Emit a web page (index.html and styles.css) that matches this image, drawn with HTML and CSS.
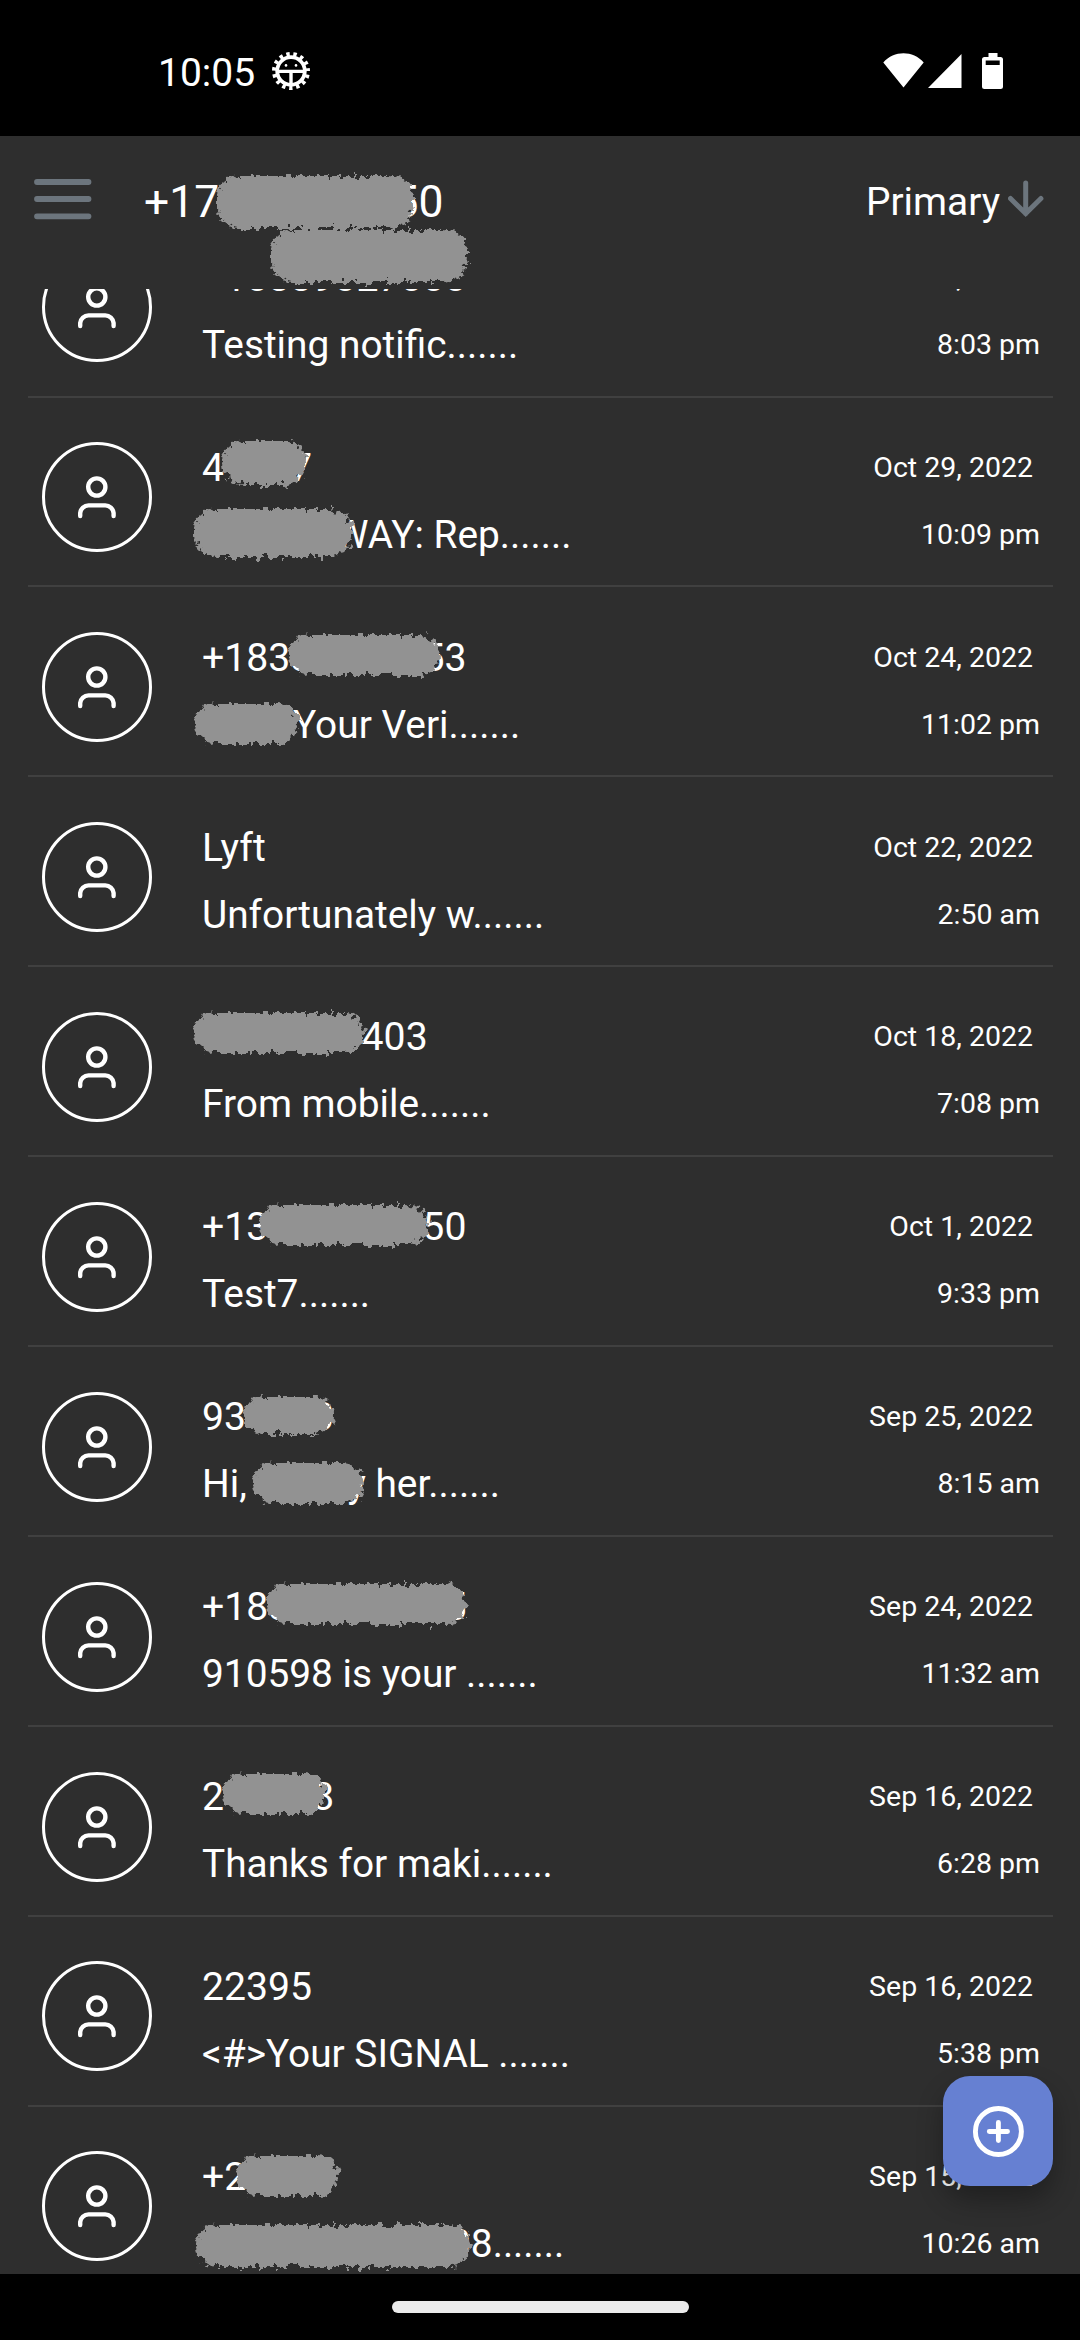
FILE: index.html
```html
<!DOCTYPE html>
<html lang="en">
<head>
<meta charset="utf-8">
<title>Messages</title>
<link rel="stylesheet" href="styles.css">
</head>
<body>
<svg class="defs" width="0" height="0" aria-hidden="true">
  <filter id="rough" x="-10%" y="-20%" width="120%" height="140%">
    <feTurbulence type="fractalNoise" baseFrequency="0.16" numOctaves="3" seed="7" result="n"/>
    <feDisplacementMap in="SourceGraphic" in2="n" scale="15" xChannelSelector="R" yChannelSelector="G"/>
  </filter>
  <symbol id="user" viewBox="3 3 104 104">
    <g fill="none" stroke="#fff" stroke-width="4.4" stroke-linecap="round">
      <circle cx="54.8" cy="45" r="8.6"/>
      <path d="M38.2 74v-3a8.4 8.4 0 0 1 8.4-7.6h16.6a8.4 8.4 0 0 1 8.4 7.6v3"/>
    </g>
  </symbol>
</svg>
<div class="screen">
  <div class="status">
    <span class="clock">10:05</span>
    <svg class="bug" viewBox="-20 -20 40 40">
      <circle r="17" fill="none" stroke="#fff" stroke-width="4" stroke-dasharray="3.4 3.721" stroke-dashoffset="-3.64"/>
      <circle r="13.800" fill="none" stroke="#fff" stroke-width="3.800"/>
      <path d="M-13 .4H13M0 0V15" stroke="#fff" stroke-width="3.4"/>
      <circle cx="-5" cy="-5.6" r="1.3" fill="#fff"/><circle cx="5" cy="-5.6" r="1.3" fill="#fff"/>
    </svg>
    <svg class="tray" viewBox="0 0 120 36">
      <path fill="#fff" d="M.3 9.5C11-2.7 30-2.7 40.7 9.5L20.5 34.5zM45 35 78.500 1V35zM105.500 0h9v4h3a2.500 2.500 0 0 1 2.500 2.500v27a2.500 2.500 0 0 1-2.500 2.500h-16a2.500 2.500 0 0 1-2.500-2.500v-27a2.500 2.500 0 0 1 2.500-2.500h4zM102.700 7.500v4.500h14v-4.500z" fill-rule="evenodd"/>
    </svg>
  </div>
  <header class="header">
    <svg class="menu" viewBox="0 0 58 42"><path d="M3 4H54.500M3 21H54.500M3 38.300H54.500" stroke="#6c757d" stroke-width="5.800" stroke-linecap="round"/></svg>
    <div class="title">+17<i class="gap" style="--n:7"></i>50<i class="scribble" style="left:73px;top:0;width:196px;height:52px"></i><i class="scribble" style="left:127px;top:54px;width:196px;height:52px"></i></div>
    <div class="filter">Primary</div>
    <svg class="arrow" viewBox="0 0 36 38"><path d="M17.700 3V33.500M2.500 18.500l15.200 15 15.200-15" fill="none" stroke="#6c757d" stroke-width="5" stroke-linecap="round"/></svg>
  </header>
  <main class="list">
    <article class="row">
      <svg class="avatar"><use href="#user"/></svg>
      <div class="text"><p>+18339827888</p><p>Testing notific.......</p></div>
      <div class="when"><p class="date">Oct 31, 2022</p><p>8:03 pm</p></div>
    </article>
    <article class="row">
      <svg class="avatar"><use href="#user"/></svg>
      <div class="text"><p>4<i class="gap" style="--n:3"></i>7</p><p><i class="gap" style="width:132px"></i>WAY: Rep.......</p><i class="scribble" style="left:20px;top:-3px;width:84px;height:44px"></i><i class="scribble" style="left:-8px;top:65px;width:158px;height:48px"></i></div>
      <div class="when"><p class="date">Oct 29, 2022</p><p>10:09 pm</p></div>
    </article>
    <article class="row">
      <svg class="avatar"><use href="#user"/></svg>
      <div class="text"><p>+1833<i class="gap" style="--n:5"></i>53</p><p><i class="gap" style="width:91px"></i>Your Veri.......</p><i class="scribble" style="left:87px;top:1px;width:151px;height:40px"></i><i class="scribble" style="left:-7px;top:70px;width:103px;height:40px"></i></div>
      <div class="when"><p class="date">Oct 24, 2022</p><p>11:02 pm</p></div>
    </article>
    <article class="row">
      <svg class="avatar"><use href="#user"/></svg>
      <div class="text"><p>Lyft</p><p>Unfortunately w.......</p></div>
      <div class="when"><p class="date">Oct 22, 2022</p><p>2:50 am</p></div>
    </article>
    <article class="row">
      <svg class="avatar"><use href="#user"/></svg>
      <div class="text"><p><i class="gap" style="--n:7.25"></i>403</p><p>From mobile.......</p><i class="scribble" style="left:-8px;top:0;width:170px;height:40px"></i></div>
      <div class="when"><p class="date">Oct 18, 2022</p><p>7:08 pm</p></div>
    </article>
    <article class="row">
      <svg class="avatar"><use href="#user"/></svg>
      <div class="text"><p>+13<i class="gap" style="--n:7"></i>50</p><p>Test7.......</p><i class="scribble" style="left:58px;top:2px;width:168px;height:40px"></i></div>
      <div class="when"><p class="date">Oct 1, 2022</p><p>9:33 pm</p></div>
    </article>
    <article class="row">
      <svg class="avatar"><use href="#user"/></svg>
      <div class="text"><p>93<i class="gap" style="--n:3"></i>0</p><p>Hi, <i class="gap" style="width:91px"></i>y her.......</p><i class="scribble" style="left:42px;top:4px;width:90px;height:37px"></i><i class="scribble" style="left:51px;top:70px;width:110px;height:41px"></i></div>
      <div class="when"><p class="date">Sep 25, 2022</p><p>8:15 am</p></div>
    </article>
    <article class="row">
      <svg class="avatar"><use href="#user"/></svg>
      <div class="text"><p>+183<i class="gap" style="--n:7"></i>5</p><p>910598 is your .......</p><i class="scribble" style="left:65px;top:1px;width:199px;height:40px"></i></div>
      <div class="when"><p class="date">Sep 24, 2022</p><p>11:32 am</p></div>
    </article>
    <article class="row">
      <svg class="avatar"><use href="#user"/></svg>
      <div class="text"><p>2<i class="gap" style="--n:4"></i>8</p><p>Thanks for maki.......</p><i class="scribble" style="left:21px;top:1px;width:102px;height:40px"></i></div>
      <div class="when"><p class="date">Sep 16, 2022</p><p>6:28 pm</p></div>
    </article>
    <article class="row">
      <svg class="avatar"><use href="#user"/></svg>
      <div class="text"><p>22395</p><p>&lt;#&gt;Your SIGNAL .......</p></div>
      <div class="when"><p class="date">Sep 16, 2022</p><p>5:38 pm</p></div>
    </article>
    <article class="row">
      <svg class="avatar"><use href="#user"/></svg>
      <div class="text"><p>+2</p><p><i class="gap" style="width:247px"></i>08.......</p><i class="scribble" style="left:35px;top:3px;width:101px;height:40px"></i><i class="scribble" style="left:-6px;top:72px;width:274px;height:42px"></i></div>
      <div class="when"><p class="date">Sep 15, 2022</p><p>10:26 am</p></div>
    </article>
  </main>
  <div class="nav"><div class="pill"></div></div>
  <button class="fab" aria-label="New message">
    <svg viewBox="0 0 110 110"><g fill="none" stroke="#fff" stroke-width="4.900" stroke-linecap="round"><circle cx="55.400" cy="55.500" r="23"/><path d="M46.300 55.500h18.200M55.400 46.400v18.200"/></g></svg>
  </button>
</div>
</body>
</html>
```
FILE: styles.css
```css
* { box-sizing: border-box; margin: 0; padding: 0; }
body { background: #000; color: #fff; font-family: Roboto, "Noto Sans", sans-serif; }
.defs { position: absolute; }
.screen { position: relative; width: 1080px; height: 2340px; display: flex; flex-direction: column; overflow: hidden; }

.status { height: 136px; flex: none; display: flex; align-items: flex-start; padding: 0 77px 0 158px; }
.clock { font-size: 39px; line-height: 46px; margin-top: 50px; width: 113px; }
.bug { width: 40px; height: 40px; margin-top: 51px; }
.tray { width: 120px; height: 36px; margin: 53px 0 0 auto; }

.header { height: 153px; flex: none; background: #2e2e2e; display: flex; align-items: flex-start; padding: 0 36px 0 34px; }
.menu { width: 58px; height: 42px; margin-top: 42px; }
.title { position: relative; font-size: 44.400px; line-height: 52px; margin: 40px 0 0 52px; }
.filter { font-size: 38.800px; line-height: 46px; margin: 43px 8px 0 auto; }
.arrow { width: 36px; height: 38px; margin-top: 44px; }

.list { flex: 1; background: #2e2e2e; overflow: hidden; padding: 0 27px 0 28px; }
.row { height: 189.900px; display: flex; align-items: flex-start; padding: 44.800px 13px 0 14px; border-bottom: 2px solid #404040; }
.row:first-child { margin-top: -81.400px; }
.avatar { flex: none; width: 110px; height: 110px; border: 3px solid #fff; border-radius: 50%; }
.text { position: relative; flex: 1; margin: 1.500px 0 0 50px; font-size: 38.850px; white-space: pre; }
.text p { height: 67px; line-height: 46px; padding-top: 1px; }
.text p:first-child { font-size: 39.200px; }
.when { margin-top: 1.500px; text-align: right; font-size: 28.500px; }
.when p { height: 67px; line-height: 34px; padding-top: 7px; }
.when .date { padding-right: 7px; }

.gap { display: inline-block; width: calc(var(--n) * 0.5615em); }
.scribble { position: absolute; background: #929292; border-radius: 22px; filter: url(#rough); }

.nav { height: 66px; flex: none; display: flex; justify-content: center; padding-top: 27px; }
.pill { width: 297px; height: 12px; border-radius: 6px; background: #ebebeb; }
.fab { position: absolute; left: 943px; top: 2076px; width: 110px; height: 110px; border: 0; border-radius: 27px; background: #6680d2; box-shadow: 0 14px 26px rgba(0, 0, 0, .3); }
.fab svg { display: block; width: 110px; height: 110px; }
```
